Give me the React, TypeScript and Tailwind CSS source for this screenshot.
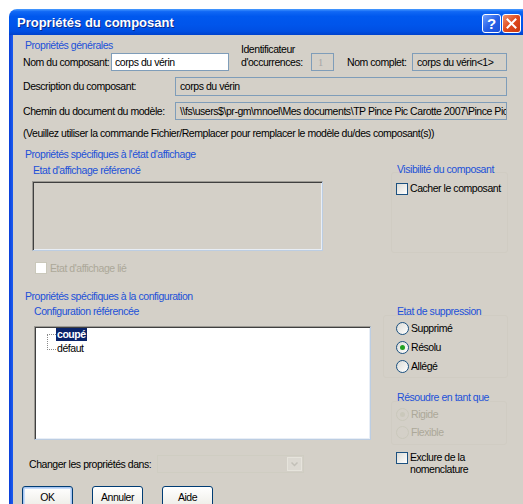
import type { ReactNode } from 'react'

// Windows XP style "component properties" dialog

function Field({ className, children }: { className: string; children?: ReactNode }) {
  return (
    <div className={`flex shrink-0 items-center overflow-hidden whitespace-nowrap border border-[#7f9db9] ${className}`}>
      {children}
    </div>
  )
}

function Check({ disabled }: { disabled?: boolean }) {
  return (
    <span
      className={`block h-[12px] w-[12px] shrink-0 border ${
        disabled
          ? 'border-[#cac8bb] bg-white'
          : 'border-[#1c5180] bg-[linear-gradient(135deg,#dcdcd7,#ffffff)]'
      }`}
    />
  )
}

function Radio({ checked, disabled }: { checked?: boolean; disabled?: boolean }) {
  return (
    <span
      className={`flex h-[13px] w-[13px] shrink-0 items-center justify-center rounded-full border ${
        disabled
          ? 'border-[#cac8bb] bg-[#d4d0c8]'
          : 'border-[#1c5180] bg-[linear-gradient(135deg,#dcdcd7,#ffffff)]'
      }`}
    >
      {checked && (
        <span className={`h-[5px] w-[5px] rounded-full ${disabled ? 'bg-[#cac8bb]' : 'bg-[#21a121]'}`} />
      )}
    </span>
  )
}

function Button({ label, focused }: { label: string; focused?: boolean }) {
  return (
    <button
      className={`flex h-[23px] w-[51px] shrink-0 items-center justify-center rounded-[3px] border border-[#003c74] bg-[linear-gradient(to_bottom,#ffffff,#f0efea_80%,#d8d2c6)] text-black ${
        focused ? 'shadow-[inset_0_0_0_1px_#a8c6f2,inset_0_0_0_2px_#c8dcf8]' : ''
      }`}
    >
      {label}
    </button>
  )
}

const heading = 'whitespace-nowrap text-[#2150d8]'

export default function App() {
  return (
    <div className="h-[504px] w-[523px] overflow-hidden bg-white pl-[9px] pt-[9px] font-['Liberation_Sans',Arial,sans-serif] text-[10.5px] leading-[13px] tracking-[-0.45px] text-black">
      {/* title bar */}
      <div className="flex h-[26px] items-start rounded-tl-[8px] bg-[linear-gradient(to_bottom,#4a9cff_0%,#1168f5_10%,#0058ee_28%,#0055eb_60%,#004fe3_85%,#0042cc_100%)] pl-[8px]">
        <span className="mt-[6px] text-[13px] leading-[15px] font-bold tracking-normal text-white [text-shadow:1px_1px_#0a2a8a]">
          Propriétés du composant
        </span>
        <div className="mr-[2px] ml-auto mt-[5px] flex gap-[1px]">
          <span className="flex h-[19px] w-[19px] items-center justify-center rounded-[3px] border border-white bg-[linear-gradient(135deg,#6fa0ff,#2862e8_50%,#1a4fd8)] text-[15px] leading-none font-bold tracking-normal text-white">
            ?
          </span>
          <span className="flex h-[19px] w-[19px] items-center justify-center rounded-[3px] border border-white bg-[linear-gradient(135deg,#f0936f,#e0491d_50%,#c8380f)]">
            <svg width="11" height="11" viewBox="0 0 11 11">
              <path d="M1.5 1.5 L9.5 9.5 M9.5 1.5 L1.5 9.5" stroke="#fff" strokeWidth="2" strokeLinecap="square" />
            </svg>
          </span>
        </div>
      </div>

      <div className="flex h-[470px]">
        <div className="w-[4px] bg-[linear-gradient(to_right,#0a3ed8,#1a5cf0)]" />
        <div className="flex-1 bg-[#d4d0c8]">
          {/* general properties */}
          <div className={`ml-[12px] mt-[4px] h-[13px] ${heading}`}>Propriétés générales</div>

          <div className="ml-[10px] mt-[1px] flex h-[18px] items-center whitespace-nowrap">
            <span className="w-[88px] shrink-0">Nom du composant:</span>
            <Field className="h-[18px] w-[118px] bg-white pl-[3px]">corps du vérin</Field>
            <span className="mb-[12px] ml-[12px] w-[70px] shrink-0">
              Identificateur
              <br />
              d'occurrences:
            </span>
            <Field className="h-[18px] w-[23px] pl-[6px] font-['Liberation_Serif',serif] text-[#a6a6a6]">1</Field>
            <span className="ml-[13px] w-[65px] shrink-0">Nom complet:</span>
            <Field className="h-[18px] w-[95px] pl-[4px]">corps du vérin&lt;1&gt;</Field>
          </div>

          <div className="ml-[10px] mt-[6px] flex h-[19px] items-center whitespace-nowrap">
            <span className="w-[152px] shrink-0">Description du composant:</span>
            <Field className="h-[19px] w-[332px] pl-[4px]">corps du vérin</Field>
          </div>

          <div className="ml-[10px] mt-[6px] flex h-[18px] items-center whitespace-nowrap">
            <span className="w-[152px] shrink-0">Chemin du document du modèle:</span>
            <Field className="h-[18px] w-[332px] pl-[4px]">
              \\fs\users$\pr-gm\mnoel\Mes documents\TP Pince Pic Carotte 2007\Pince Pic Carotte
            </Field>
          </div>

          <div className="ml-[10px] mt-[7px] h-[13px] whitespace-nowrap">
            (Veuillez utiliser la commande Fichier/Remplacer pour remplacer le modèle du/des composant(s))
          </div>

          {/* display state */}
          <div className={`ml-[12px] mt-[8px] h-[13px] ${heading}`}>Propriétés spécifiques à l'état d'affichage</div>

          <div className="flex items-start">
            <div className="ml-[19px] w-[291px] shrink-0">
              <div className={`ml-[1px] mt-[3px] h-[13px] ${heading}`}>Etat d'affichage référencé</div>
              <div className="mt-[4px] h-[70px] border border-t-[#9c9a94] border-l-[#9c9a94] border-r-[#bccde2] border-b-[#bccde2] shadow-[inset_1px_1px_0_#404040,inset_-1px_-1px_0_#e8eef6]" />
              <div className="ml-[3px] mt-[11px] flex h-[12px] items-center gap-[3px] whitespace-nowrap text-[#aca899]">
                <Check disabled />
                <span>Etat d'affichage lié</span>
              </div>
            </div>
            <div className="ml-[68px] w-[117px] shrink-0">
              <div className={`ml-[6px] mt-[2px] h-[13px] ${heading}`}>Visibilité du composant</div>
              <div className="-mt-[4px] h-[81px] rounded-[3px] border border-[#d0ccc3] pl-[4px] pt-[9px]">
                <div className="flex items-center gap-[2px] whitespace-nowrap">
                  <Check />
                  <span>Cacher le composant</span>
                </div>
              </div>
            </div>
          </div>

          {/* configuration */}
          <div className={`ml-[12px] mt-[16px] h-[13px] ${heading}`}>Propriétés spécifiques à la configuration</div>

          <div className="flex items-start">
            <div className="ml-[16px] w-[342px] shrink-0">
              <div className={`ml-[5px] mt-[2px] h-[13px] ${heading}`}>Configuration référencée</div>
              <div className="ml-[5px] mt-[8px] h-[114px] w-[337px] border border-t-[#9c9a94] border-l-[#9c9a94] border-r-[#bccde2] border-b-[#bccde2] bg-white shadow-[inset_1px_1px_0_#404040,inset_-1px_-1px_0_#e8eef6]">
                <div className="ml-[12px] mt-[1px] flex">
                  <div className="mt-[6px] h-[16px] w-[9px] border-y border-l border-dotted border-[#8a8a8a]" />
                  <div>
                    <div className="h-[13px] bg-[#0a246a] px-[1px] font-bold text-white">coupé</div>
                    <div className="mt-[1px] h-[13px] pl-[1px]">défaut</div>
                  </div>
                </div>
              </div>
              <div className="mt-[15px] flex h-[18px] items-center whitespace-nowrap">
                <span className="w-[128px] shrink-0">Changer les propriétés dans:</span>
                <div className="flex h-[18px] w-[147px] justify-end border border-[#cfcdc2] p-[1px]">
                  <span className="flex w-[15px] items-center justify-center border border-[#e6e4dc] bg-[#dcd9d2]">
                    <svg width="7" height="5" viewBox="0 0 7 5">
                      <path d="M0.5 0.5 L3.5 3.5 L6.5 0.5" fill="none" stroke="#c2c0b8" strokeWidth="1.5" />
                    </svg>
                  </span>
                </div>
              </div>
            </div>

            <div className="ml-[12px] w-[125px] shrink-0 whitespace-nowrap">
              <div className={`ml-[14px] mt-[2px] h-[13px] ${heading}`}>Etat de suppression</div>
              <div className="-mt-[3px] h-[63px] rounded-[3px] border border-[#d0ccc3] pl-[12px] pt-[3px]">
                <div className="flex h-[19px] items-center gap-[2px]">
                  <Radio />
                  <span>Supprimé</span>
                </div>
                <div className="flex h-[19px] items-center gap-[2px]">
                  <Radio checked />
                  <span>Résolu</span>
                </div>
                <div className="flex h-[19px] items-center gap-[2px]">
                  <Radio />
                  <span>Allégé</span>
                </div>
              </div>

              <div className={`ml-[14px] mt-[13px] h-[13px] ${heading}`}>Résoudre en tant que</div>
              <div className="-mt-[3px] ml-[8px] h-[44px] w-[116px] rounded-[3px] border border-[#d0ccc3] pl-[4px] pt-[3px] text-[#aca899]">
                <div className="flex h-[18px] items-center gap-[2px]">
                  <Radio checked disabled />
                  <span>Rigide</span>
                </div>
                <div className="flex h-[18px] items-center gap-[2px]">
                  <Radio disabled />
                  <span>Flexible</span>
                </div>
              </div>

              <div className="ml-[13px] mt-[7px] flex items-start gap-[2px]">
                <Check />
                <span className="-mt-[1px] leading-[12px]">
                  Exclure de la
                  <br />
                  nomenclature
                </span>
              </div>
            </div>
          </div>

          <div className="ml-[9px] mt-[11px] flex gap-[19px]">
            <Button label="OK" focused />
            <Button label="Annuler" />
            <Button label="Aide" />
          </div>
        </div>
      </div>
    </div>
  )
}
